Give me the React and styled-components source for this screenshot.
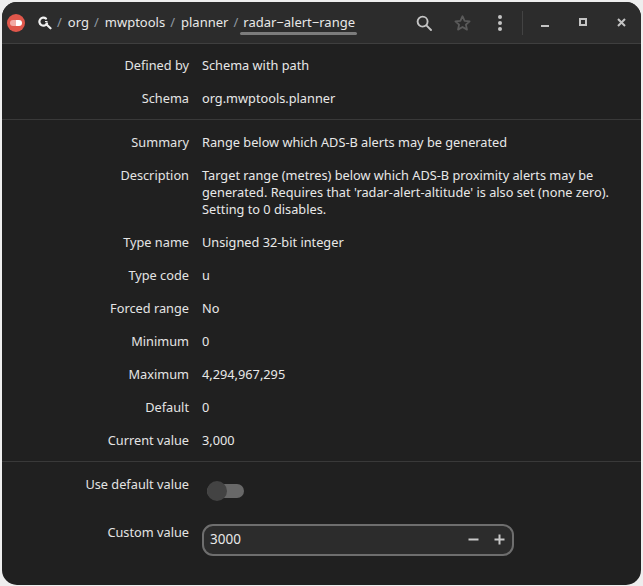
import React from 'react';
import styled, { createGlobalStyle } from 'styled-components';

const Global = createGlobalStyle`
  html, body { margin: 0; padding: 0; background: #eeeeee; }
  body { width: 643px; height: 586px; overflow: hidden; font-family: "Noto Sans", sans-serif; }
`;

const Frame = styled.div`
  width: 643px;
  height: 586px;
  padding: 2px 2px 1px 2px;
  box-sizing: border-box;
`;

const Win = styled.div`
  height: 100%;
  background: #202020;
  border-radius: 15px;
  overflow: hidden;
  color: #e8e8e8;
  font-size: 12.75px;
  line-height: 17px;
`;

const Header = styled.header`
  height: 41px;
  background: #2c2c2c;
  border-bottom: 1px solid #3f3f3f;
  display: flex;
  align-items: center;
  padding: 0 1px 0 5px;
`;

const AppIcon = styled.span`
  width: 18px;
  height: 18px;
  border-radius: 50%;
  background: #e0574b;
  display: flex;
  align-items: center;
  justify-content: center;
  margin-right: 13px;
`;

const AppToggle = styled.span`
  width: 12px;
  height: 6px;
  border-radius: 3px;
  background: linear-gradient(90deg, #f2aca6 0 50%, #fff 50%);
`;

const Crumb = styled.span`
  color: ${p => (p.$sep ? '#8f9aa3' : '#e8e8e8')};
  margin: ${p => (p.$sep ? '0 6px 0 5px' : '0')};
  font-size: 13px;
`;

const CurrentCrumb = styled(Crumb)`
  position: relative;
  margin-left: -1px;
  &::after {
    content: '';
    position: absolute;
    left: -3px;
    right: -2px;
    bottom: -4px;
    height: 3px;
    border-radius: 2px;
    background: #7c7c7c;
  }
`;

const Spacer = styled.div`
  flex: 1;
`;

const ToolBtn = styled.span`
  width: ${p => p.$w || 38}px;
  height: 24px;
  display: flex;
  align-items: center;
  justify-content: center;
`;

const VSep = styled.span`
  width: 1px;
  height: 24px;
  background: #434343;
  margin: 0 3px 0 3px;
`;

const Body = styled.div`
  padding-top: 13px;
`;

const Section = styled.section`
  display: flex;
  flex-direction: column;
  gap: 16px;
  padding: ${p => p.$pad || '14px 0 12px'};
  border-bottom: ${p => (p.$last ? 'none' : '1px solid #393939')};
`;

const Row = styled.div`
  display: grid;
  grid-template-columns: 187px 1fr;
  column-gap: 13px;
`;

const Label = styled.div`
  text-align: right;
  color: #e4e4e4;
`;

const Value = styled.div`
  color: #e8e8e8;
  width: 415px;
`;

const Switch = styled.span`
  display: block;
  position: relative;
  width: 37px;
  height: 14px;
  margin: 8px 0 10px 5px;
  border-radius: 7px;
  background: #686868;
  &::before {
    content: '';
    position: absolute;
    left: 0;
    top: -3px;
    width: 20px;
    height: 20px;
    border-radius: 50%;
    background: #434343;
  }
`;

const SpinBox = styled.div`
  width: 312px;
  height: 32px;
  box-sizing: border-box;
  border: 2px solid #6e6e6e;
  border-radius: 11px;
  background: #2c2c2c;
  display: flex;
  align-items: center;
  padding: 0 0 1px 6px;
  font-size: 13.5px;
`;

const SpinBtn = styled.span`
  width: 26px;
  display: flex;
  justify-content: center;
`;

const Info = ({ label, children }) => (
  <Row>
    <Label>{label}</Label>
    <Value>{children}</Value>
  </Row>
);

export default function App() {
  return (
    <Frame>
      <Global />
      <Win>
        <Header>
          <AppIcon><AppToggle /></AppIcon>
          <svg width="14" height="14" viewBox="0 0 14 14" fill="none" stroke="#f0f0f0" strokeWidth="2.2">
            <path d="M8 2.6A4 4 0 1 0 9 7.4" strokeLinecap="round" />
            <path d="M8.3 8.3 12.5 12.3" strokeLinecap="round" />
            <path d="M7 5.6 9.5 5.6" strokeWidth="1.4" />
          </svg>
          <Crumb $sep>/</Crumb>
          <Crumb>org</Crumb>
          <Crumb $sep>/</Crumb>
          <Crumb>mwptools</Crumb>
          <Crumb $sep>/</Crumb>
          <Crumb>planner</Crumb>
          <Crumb $sep>/</Crumb>
          <CurrentCrumb>radar−alert−range</CurrentCrumb>
          <Spacer />
          <ToolBtn>
            <svg width="16" height="16" viewBox="0 0 16 16" fill="none" stroke="#c4c4c4" strokeWidth="1.9">
              <circle cx="6.6" cy="6.6" r="5" />
              <path d="M10.4 10.4 15 15" strokeLinecap="round" />
            </svg>
          </ToolBtn>
          <ToolBtn>
            <svg width="17" height="16" viewBox="0 0 17 16" fill="none" stroke="#5a5a5a" strokeWidth="1.8" strokeLinejoin="round">
              <path d="M8.5 1.2 10.6 5.8 15.6 6.3 11.9 9.6 13 14.6 8.5 12 4 14.6 5.1 9.6 1.4 6.3 6.4 5.8Z" />
            </svg>
          </ToolBtn>
          <ToolBtn>
            <svg width="4" height="16" viewBox="0 0 4 16" fill="#c4c4c4">
              <circle cx="2" cy="2" r="2" />
              <circle cx="2" cy="8" r="2" />
              <circle cx="2" cy="14" r="2" />
            </svg>
          </ToolBtn>
          <VSep />
          <ToolBtn $w={38}>
            <svg width="9" height="9" viewBox="0 0 9 9" fill="#c4c4c4"><rect x="0" y="7" width="8" height="2" /></svg>
          </ToolBtn>
          <ToolBtn $w={38}>
            <svg width="9" height="9" viewBox="0 0 9 9" fill="none" stroke="#c4c4c4" strokeWidth="2"><rect x="1" y="1" width="6" height="6" /></svg>
          </ToolBtn>
          <ToolBtn $w={38}>
            <svg width="9" height="9" viewBox="0 0 9 9" fill="none" stroke="#c4c4c4" strokeWidth="2"><path d="M1 1 8 8M8 1 1 8" /></svg>
          </ToolBtn>
        </Header>
        <Body>
          <Section $pad="0 0 12px">
            <Info label="Defined by">Schema with path</Info>
            <Info label="Schema">org.mwptools.planner</Info>
          </Section>
          <Section>
            <Info label="Summary">Range below which ADS-B alerts may be generated</Info>
            <Info label="Description">
              Target range (metres) below which ADS-B proximity alerts may be generated. Requires that 'radar-alert-altitude' is also set (none zero). Setting to 0 disables.
            </Info>
            <Info label="Type name">Unsigned 32-bit integer</Info>
            <Info label="Type code">u</Info>
            <Info label="Forced range">No</Info>
            <Info label="Minimum">0</Info>
            <Info label="Maximum">4,294,967,295</Info>
            <Info label="Default">0</Info>
            <Info label="Current value">3,000</Info>
          </Section>
          <Section $last $pad="14px 0 0">
            <Row>
              <Label>Use default value</Label>
              <div><Switch /></div>
            </Row>
            <Row>
              <Label>Custom value</Label>
              <SpinBox>
                <span>3000</span>
                <Spacer />
                <SpinBtn>
                  <svg width="11" height="11" viewBox="0 0 11 11" fill="#c8c8c8"><rect x="0.5" y="4.5" width="10" height="2" /></svg>
                </SpinBtn>
                <SpinBtn>
                  <svg width="11" height="11" viewBox="0 0 11 11" fill="#c8c8c8"><path d="M4.5 0.5h2v4h4v2h-4v4h-2v-4h-4v-2h4z" /></svg>
                </SpinBtn>
              </SpinBox>
            </Row>
          </Section>
        </Body>
      </Win>
    </Frame>
  );
}
